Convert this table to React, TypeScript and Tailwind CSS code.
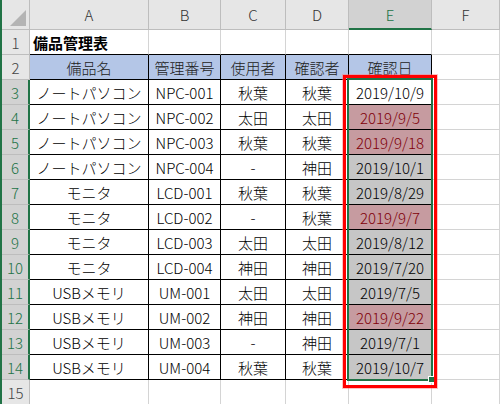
import React from "react";

type Fill = "white" | "red" | "grey";
const data: [string, string, string, string, string, Fill][] = [
  ["ノートパソコン", "NPC-001", "秋葉", "秋葉", "2019/10/9", "white"],
  ["ノートパソコン", "NPC-002", "太田", "太田", "2019/9/5", "red"],
  ["ノートパソコン", "NPC-003", "秋葉", "秋葉", "2019/9/18", "red"],
  ["ノートパソコン", "NPC-004", "-", "神田", "2019/10/1", "grey"],
  ["モニタ", "LCD-001", "秋葉", "秋葉", "2019/8/29", "grey"],
  ["モニタ", "LCD-002", "-", "秋葉", "2019/9/7", "red"],
  ["モニタ", "LCD-003", "太田", "太田", "2019/8/12", "grey"],
  ["モニタ", "LCD-004", "神田", "神田", "2019/7/20", "grey"],
  ["USBメモリ", "UM-001", "太田", "太田", "2019/7/5", "grey"],
  ["USBメモリ", "UM-002", "神田", "神田", "2019/9/22", "red"],
  ["USBメモリ", "UM-003", "-", "神田", "2019/7/1", "grey"],
  ["USBメモリ", "UM-004", "秋葉", "秋葉", "2019/10/7", "grey"],
];

const widths = ["w-[119px]", "w-[72px]", "w-[65px]", "w-[63px]", "w-[83px]", "w-[68px]"];
const letters = ["A", "B", "C", "D", "E", "F"];

function RowHeader({ n, selected }: { n: number; selected: boolean }) {
  return (
    <div
      className={
        selected
          ? "w-[28px] shrink-0 flex items-center justify-center bg-[#d2d2d2] text-[#217346] border-b border-b-[#bdbdbd] border-r-2 border-r-[#217346]"
          : "w-[28px] shrink-0 flex items-center justify-center bg-[#e6e6e6] text-[#444444] border-b border-b-[#bdbdbd] border-r border-r-[#bdbdbd]"
      }
    >
      {n}
    </div>
  );
}

function Cell({
  col,
  row,
  children,
  bg,
  extra,
}: {
  col: number;
  row: number;
  children?: React.ReactNode;
  bg?: string;
  extra?: string;
}) {
  const inTableRow = row >= 2 && row <= 14;
  const rightBlack = inTableRow && col <= 4;
  const bottomBlack = row >= 1 && row <= 14 && col <= 4;
  return (
    <div
      className={[
        widths[col],
        "shrink-0 flex items-center border-r border-b",
        rightBlack ? "border-r-black" : "border-r-[#d4d4d4]",
        bottomBlack ? "border-b-black" : "border-b-[#d4d4d4]",
        bg ?? "bg-white",
        extra ?? "justify-center",
      ].join(" ")}
    >
      {children}
    </div>
  );
}

export default function App() {
  return (
    <div
      className="relative w-[500px] h-[404px] overflow-hidden bg-white border-l-2 border-l-[#217346] text-[15px] leading-none font-light text-black"
      style={{ fontFamily: '"Noto Sans CJK JP", "Noto Sans", sans-serif' }}
    >
      {/* column header */}
      <div className="flex h-[30px]">
        <div className="w-[28px] shrink-0 bg-[#e6e6e6] border-r border-b border-[#bdbdbd] flex items-end justify-end pb-[2px] pr-[2px]">
          <svg width="18" height="18" viewBox="0 0 18 18">
            <polygon points="1,17 17,17 17,1" fill="#b4b4b4" />
          </svg>
        </div>
        {letters.map((l, i) => (
          <div
            key={l}
            className={[
              widths[i],
              "shrink-0 flex items-center justify-center border-r border-r-[#bdbdbd]",
              i === 4
                ? "bg-[#d2d2d2] text-[#217346] border-b-2 border-b-[#217346]"
                : "bg-[#e6e6e6] text-[#333333] border-b border-b-[#bdbdbd]",
            ].join(" ")}
          >
            {l}
          </div>
        ))}
      </div>

      {/* row 1 */}
      <div className="flex h-[25px]">
        <RowHeader n={1} selected={false} />
        <Cell col={0} row={1} extra="justify-start pl-[3px] font-bold">
          備品管理表
        </Cell>
        {[1, 2, 3, 4, 5].map((c) => (
          <Cell key={c} col={c} row={1} />
        ))}
      </div>

      {/* row 2 */}
      <div className="flex h-[25px]">
        <RowHeader n={2} selected={false} />
        {["備品名", "管理番号", "使用者", "確認者", "確認日"].map((t, i) => (
          <Cell key={t} col={i} row={2} bg="bg-[#b4c6e7]">
            <span className="text-[#222222]">{t}</span>
          </Cell>
        ))}
        <Cell col={5} row={2} />
      </div>

      {/* data rows */}
      {data.map((r, idx) => {
        const row = idx + 3;
        const fill = r[5];
        const eBg = fill === "white" ? "bg-white" : fill === "red" ? "bg-[#c69ba0]" : "bg-[#c6c6c6]";
        return (
          <div key={row} className="flex h-[25px]">
            <RowHeader n={row} selected={true} />
            <Cell col={0} row={row}>{r[0]}</Cell>
            <Cell col={1} row={row}>{r[1]}</Cell>
            <Cell col={2} row={row}>{r[2]}</Cell>
            <Cell col={3} row={row}>{r[3]}</Cell>
            <Cell col={4} row={row} bg={eBg}>
              <span className={fill === "red" ? "text-[#7f0008]" : "text-black"}>{r[4]}</span>
            </Cell>
            <Cell col={5} row={row} />
          </div>
        );
      })}

      {/* row 15 */}
      <div className="flex h-[25px]">
        <RowHeader n={15} selected={false} />
        {[0, 1, 2, 3, 4, 5].map((c) => (
          <Cell key={c} col={c} row={15} />
        ))}
      </div>

      {/* selection border */}
      <div className="absolute left-[345px] top-[78px] w-[86px] h-[303px] border-2 border-[#217346] pointer-events-none" />
      {/* fill handle */}
      <div className="absolute left-[426px] top-[376px] w-[7px] h-[7px] bg-[#217346] border border-white pointer-events-none" />
      {/* red highlight box */}
      <div className="absolute left-[341px] top-[75px] w-[94px] h-[313px] border-[3px] border-[#ff0000] shadow-[0_0_0_1px_rgba(255,120,120,0.45)] pointer-events-none" />
    </div>
  );
}
